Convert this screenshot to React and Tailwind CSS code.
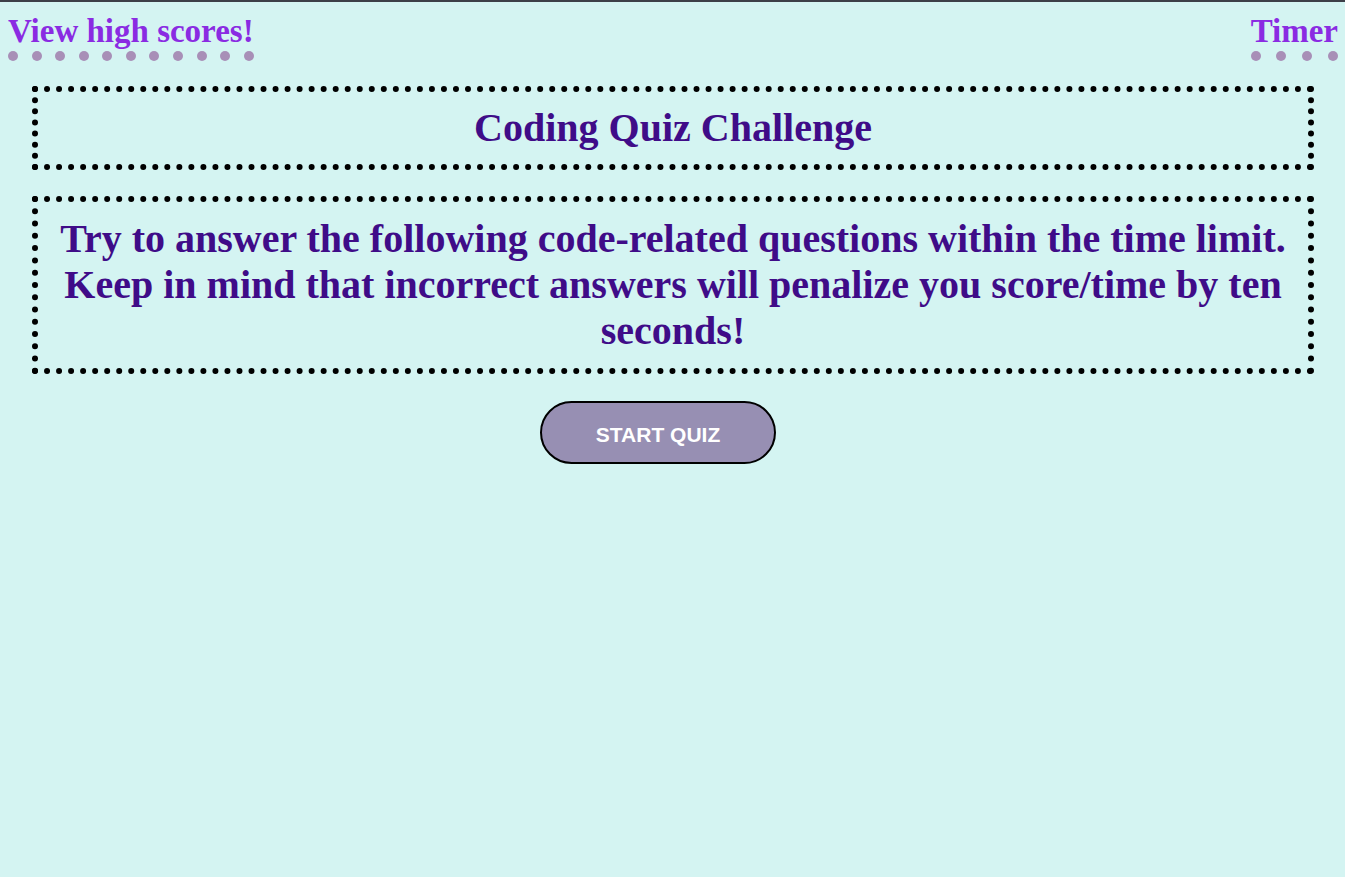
import React from 'react';

// row of dots under the header links
const Dots = ({ count }) => (
  <div className="flex justify-between h-[10px]">
    {Array.from({ length: count }).map((_, i) => (
      <span key={i} className="w-[10px] h-[10px] rounded-full bg-[#a88fb7]" />
    ))}
  </div>
);

const App = () => {
  return (
    <div className="min-h-[877px] bg-[#d4f4f2] border-t-2 border-[#3c3f48]">
      {/* Header */}
      <header className="flex justify-between items-start pl-2 pr-[7px] pt-[10px] font-['Liberation_Serif',serif]">
        <a className="flex flex-col text-[33px] leading-[39px] font-bold text-[#8a2be2]">
          <span>View high scores!</span>
          <Dots count={11} />
        </a>
        <div className="flex flex-col text-[33px] leading-[39px] font-bold text-[#8a2be2]">
          <span>Timer</span>
          <Dots count={4} />
        </div>
      </header>

      {/* Main */}
      <main className="pl-8 pr-[31px] pt-[25px] flex flex-col font-['Liberation_Serif',serif] text-[#3f0c88]">
        <section className="border-[6px] border-dotted border-black py-[13px]">
          <h1 className="text-center text-[40px] leading-[46px] font-bold">Coding Quiz Challenge</h1>
        </section>
        <section className="mt-[26px] border-[6px] border-dotted border-black px-4 py-[14px]">
          <p className="text-center text-[40px] leading-[46px] font-bold">
            Try to answer the following code-related questions within the time limit. Keep in mind that incorrect answers will penalize you score/time by ten seconds!
          </p>
        </section>
        <div className="flex justify-center mt-[27px]">
          <button className="ml-[-30px] w-[236px] h-[63px] pt-1 rounded-full bg-[#978fb3] border-2 border-black text-white font-bold text-[21px] font-['Liberation_Sans',sans-serif]">
            START QUIZ
          </button>
        </div>
      </main>
    </div>
  );
};

export default App;
